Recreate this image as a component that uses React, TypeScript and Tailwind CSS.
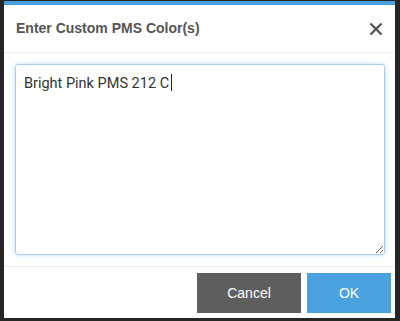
import React from "react";

export default function App() {
  return (
    <div className="h-[321px] w-[400px] bg-[#262626] pl-[4px] pr-[5px] pt-[1px] pb-[3px]" style={{ fontFamily: '"Liberation Sans", Arial, sans-serif' }}>
      <div className="flex h-full flex-col bg-white border-t-[4px] border-[#4a9fe0]">
        <div className="flex h-[48px] items-center justify-between border-b border-[#ececec] pl-[12px] pr-[12px]">
          <div className="text-[14px] font-bold text-[#555555]">Enter Custom PMS Color(s)</div>
          <svg width="14" height="14" viewBox="0 0 14 14" className="mt-[1px]">
            <path d="M1.5 1.5 L12.5 12.5 M12.5 1.5 L1.5 12.5" stroke="#555555" strokeWidth="2.4" strokeLinecap="butt" />
          </svg>
        </div>
        <div className="flex-1 pl-[11px] pr-[10px] pt-[11px] pb-[11px]">
          <div className="relative h-full w-full">
            <textarea
              defaultValue="Bright Pink PMS 212 C"
              className="h-full w-full resize-y rounded-[3px] border border-[#a9cbf0] px-[8px] py-[8px] text-[14.5px] text-[#333333] outline-none shadow-[0_0_4px_rgba(102,175,233,0.45)]"
              style={{ fontFamily: 'Roboto, "Liberation Sans", sans-serif' }}
            />
            <span className="pointer-events-none absolute left-[156px] top-[10px] h-[17px] w-[1px] bg-[#222222]" />
          </div>
        </div>
        <div className="flex justify-end gap-[6px] border-t border-[#ececec] pt-[6px] pb-[5px] pr-[4px]">
          <button className="h-[40px] w-[104px] bg-[#5e5e5e] text-[14px] text-white">Cancel</button>
          <button className="h-[40px] w-[84px] bg-[#4aa3df] text-[14px] text-white">OK</button>
        </div>
      </div>
    </div>
  );
}
